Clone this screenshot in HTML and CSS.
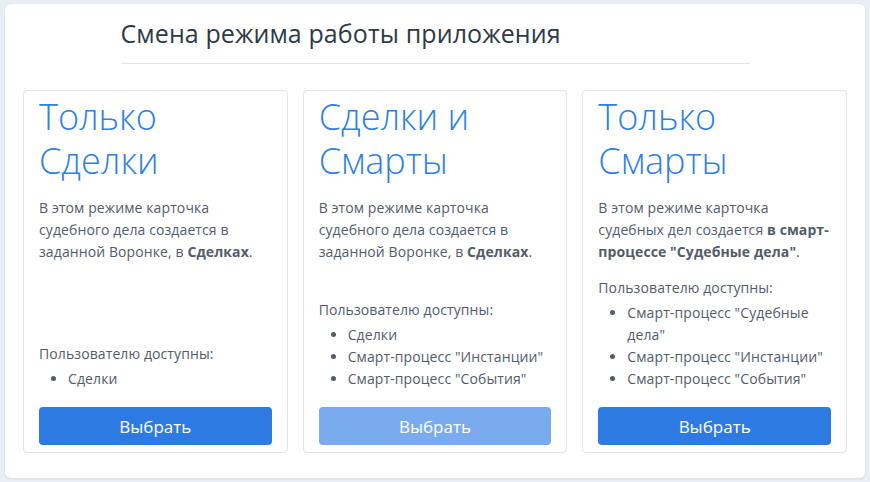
FILE: index.html
```html
<!DOCTYPE html>
<html lang="ru">
<head>
    <meta charset="UTF-8">
    <meta name="viewport" content="width=device-width, initial-scale=1.0">
    <title>Смена режима работы приложения</title>
    <link rel="stylesheet" href="styles.css">
</head>
<body>
    <div class="panel">
        <div class="panel-head">
            <h1>Смена режима работы приложения</h1>
        </div>
        <div class="modes">
            <div class="mode">
                <h2>Только Сделки</h2>
                <p class="mode-desc">В этом режиме карточка судебного дела создается в заданной Воронке, в <b>Сделках</b>.</p>
                <div class="mode-access">
                    <p>Пользователю доступны:</p>
                    <ul>
                        <li>Сделки</li>
                    </ul>
                </div>
                <button class="btn">Выбрать</button>
            </div>
            <div class="mode">
                <h2>Сделки и Смарты</h2>
                <p class="mode-desc">В этом режиме карточка судебного дела создается в заданной Воронке, в <b>Сделках</b>.</p>
                <div class="mode-access">
                    <p>Пользователю доступны:</p>
                    <ul>
                        <li>Сделки</li>
                        <li>Смарт-процесс "Инстанции"</li>
                        <li>Смарт-процесс "События"</li>
                    </ul>
                </div>
                <button class="btn btn-disabled" disabled>Выбрать</button>
            </div>
            <div class="mode">
                <h2>Только Смарты</h2>
                <p class="mode-desc">В этом режиме карточка судебных дел создается <b>в смарт-процессе "Судебные дела"</b>.</p>
                <div class="mode-access">
                    <p>Пользователю доступны:</p>
                    <ul>
                        <li>Смарт-процесс "Судебные дела"</li>
                        <li>Смарт-процесс "Инстанции"</li>
                        <li>Смарт-процесс "События"</li>
                    </ul>
                </div>
                <button class="btn">Выбрать</button>
            </div>
        </div>
    </div>
</body>
</html>
```

FILE: styles.css
```css
body {
    margin: 0;
    padding: 4px 5px 5px;
    background-color: #e9eef5;
    font-family: "Open Sans", Arial, sans-serif;
    color: #535c69;
}
.panel {
    background-color: #fff;
    border-radius: 6px;
    padding: 0 18px 25px;
    box-shadow: 0 1px 3px rgba(0, 0, 0, 0.08);
}
.panel-head {
    max-width: 629px;
    margin: 0 auto;
    border-bottom: 1px solid #e3e6ea;
}
.panel-head h1 {
    margin: 0;
    padding: 12px 0 13px;
    font-size: 25px;
    line-height: 34px;
    font-weight: 400;
    color: #2f3a47;
    letter-spacing: 0.1px;
}
.modes {
    display: grid;
    grid-template-columns: 1fr 1fr 1fr;
    gap: 15px;
    margin-top: 26px;
}
.mode {
    display: flex;
    flex-direction: column;
    border: 1px solid #e2e5e9;
    border-radius: 4px;
    padding: 4px 15px 7px;
}
.mode h2 {
    margin: 0;
    font-size: 36px;
    line-height: 44px;
    font-weight: 300;
    color: #2f7fe3;
}
.mode-desc {
    margin: 14px 0 0;
    font-size: 14px;
    line-height: 22px;
    letter-spacing: 0.1px;
}
.mode-access {
    margin-top: auto;
    padding-top: 14px;
    font-size: 14px;
    line-height: 22px;
    letter-spacing: 0.1px;
}
.mode-access p {
    margin: 0;
}
.mode-access ul {
    margin: 3px 0 0;
    padding-left: 29px;
}
.btn {
    margin-top: 17px;
    height: 38px;
    border: 0;
    border-radius: 4px;
    background-color: #2d7be2;
    color: #fff;
    font-family: "Open Sans", Arial, sans-serif;
    font-size: 17px;
    font-weight: 500;
}
.btn-disabled {
    background-color: #7aabee;
}
```
